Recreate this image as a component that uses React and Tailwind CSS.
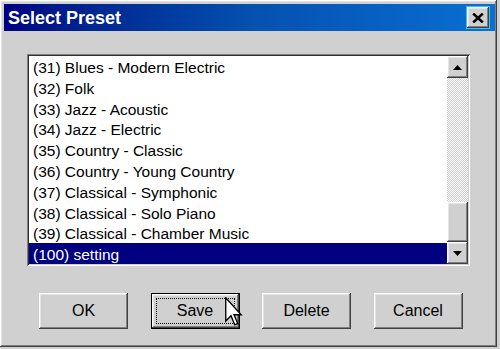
import React from "react";

const presets = [
  "(31) Blues - Modern Electric",
  "(32) Folk",
  "(33) Jazz - Acoustic",
  "(34) Jazz - Electric",
  "(35) Country - Classic",
  "(36) Country - Young Country",
  "(37) Classical - Symphonic",
  "(38) Classical - Solo Piano",
  "(39) Classical - Chamber Music",
  "(100) setting",
];

const bevel =
  "shadow-[inset_-1px_-1px_#404040,inset_1px_1px_#ffffff,inset_-2px_-2px_#808080,inset_2px_2px_#e4e4e4]";

function ScrollButton({ up }) {
  return (
    <div className={`h-[22px] w-full bg-[#d0d0d0] flex items-center justify-center ${bevel}`}>
      <svg width="9" height="5" viewBox="0 0 9 5">
        {up ? <polygon points="0,5 9,5 4.5,0" fill="#000" /> : <polygon points="0,0 9,0 4.5,5" fill="#000" />}
      </svg>
    </div>
  );
}

function DialogButton({ label, isDefault }) {
  if (isDefault) {
    return (
      <div className="w-[89px] h-[36px] border border-black">
        <div className={`w-full h-full bg-[#d0d0d0] p-[4px] ${bevel}`}>
          <div className="w-full h-full border border-dotted border-black flex items-center justify-center text-[16px] text-black">
            {label}
          </div>
        </div>
      </div>
    );
  }
  return (
    <div className={`w-[89px] h-[36px] bg-[#d0d0d0] flex items-center justify-center text-[16px] text-black ${bevel}`}>
      {label}
    </div>
  );
}

export default function App() {
  return (
    <div className="w-[500px] h-[349px] bg-[#d0d0d0] font-['Liberation_Sans',Arial,sans-serif] relative overflow-hidden">
      <div className={`w-[497px] h-[347px] bg-[#d0d0d0] pl-[4px] pt-[4px] pr-[2px] flex flex-col ${bevel}`}>
        {/* title bar */}
        <div className="h-[27px] bg-gradient-to-r from-[#000080] via-[#0650b0] to-[#0a6fd2] flex items-center justify-between pl-[4px] pr-[5px]">
          <span className="text-white font-bold text-[18px] leading-none">Select Preset</span>
          <div className="border border-[#38c4f0]">
            <div className={`w-[22px] h-[21px] bg-[#d0d0d0] flex items-center justify-center ${bevel}`}>
              <svg width="12" height="10" viewBox="0 0 12 10">
                <path d="M1.2 0.6 L10.8 9.4 M10.8 0.6 L1.2 9.4" stroke="#000" strokeWidth="2.6" />
              </svg>
            </div>
          </div>
        </div>

        {/* list box */}
        <div className="ml-[23px] mt-[23px] w-[443px] h-[212px] bg-white p-[2px] shadow-[inset_1px_1px_#808080,inset_-1px_-1px_#ffffff,inset_2px_2px_#303030,inset_-2px_-2px_#d0d0d0] flex">
          <div className="flex-1 flex flex-col justify-end overflow-hidden">
            {presets.map((p, i) => {
              const selected = i === presets.length - 1;
              return (
                <div
                  key={p}
                  className={`h-[20.8px] shrink-0 pl-[4px] pt-[2px] text-[15.5px] leading-[20px] whitespace-nowrap ${
                    selected ? "bg-[#000080] text-white" : "text-black"
                  }`}
                >
                  {p}
                </div>
              );
            })}
          </div>
          <div className="w-[21px] flex flex-col">
            <ScrollButton up />
            <div className="flex-1 bg-[image:repeating-conic-gradient(#ffffff_0%_25%,#d0d0d0_0%_50%)] bg-[length:2px_2px]" />
            <div className={`h-[40px] bg-[#d0d0d0] ${bevel}`} />
            <ScrollButton />
          </div>
        </div>

        {/* buttons */}
        <div className="ml-[35px] mt-[27px] flex gap-[22.5px]">
          <DialogButton label="OK" />
          <DialogButton label="Save" isDefault />
          <DialogButton label="Delete" />
          <DialogButton label="Cancel" />
        </div>
      </div>

      {/* mouse cursor */}
      <svg className="absolute left-[225px] top-[297px]" width="18" height="30" viewBox="0 0 12 20">
        <path
          d="M0.5 0.5 L0.5 16 L4 12.5 L6.5 18.5 L8.5 17.6 L6 11.8 L10.8 11.8 Z"
          fill="#ffffff"
          stroke="#000000"
          strokeWidth="0.9"
          strokeLinejoin="miter"
        />
      </svg>
    </div>
  );
}
